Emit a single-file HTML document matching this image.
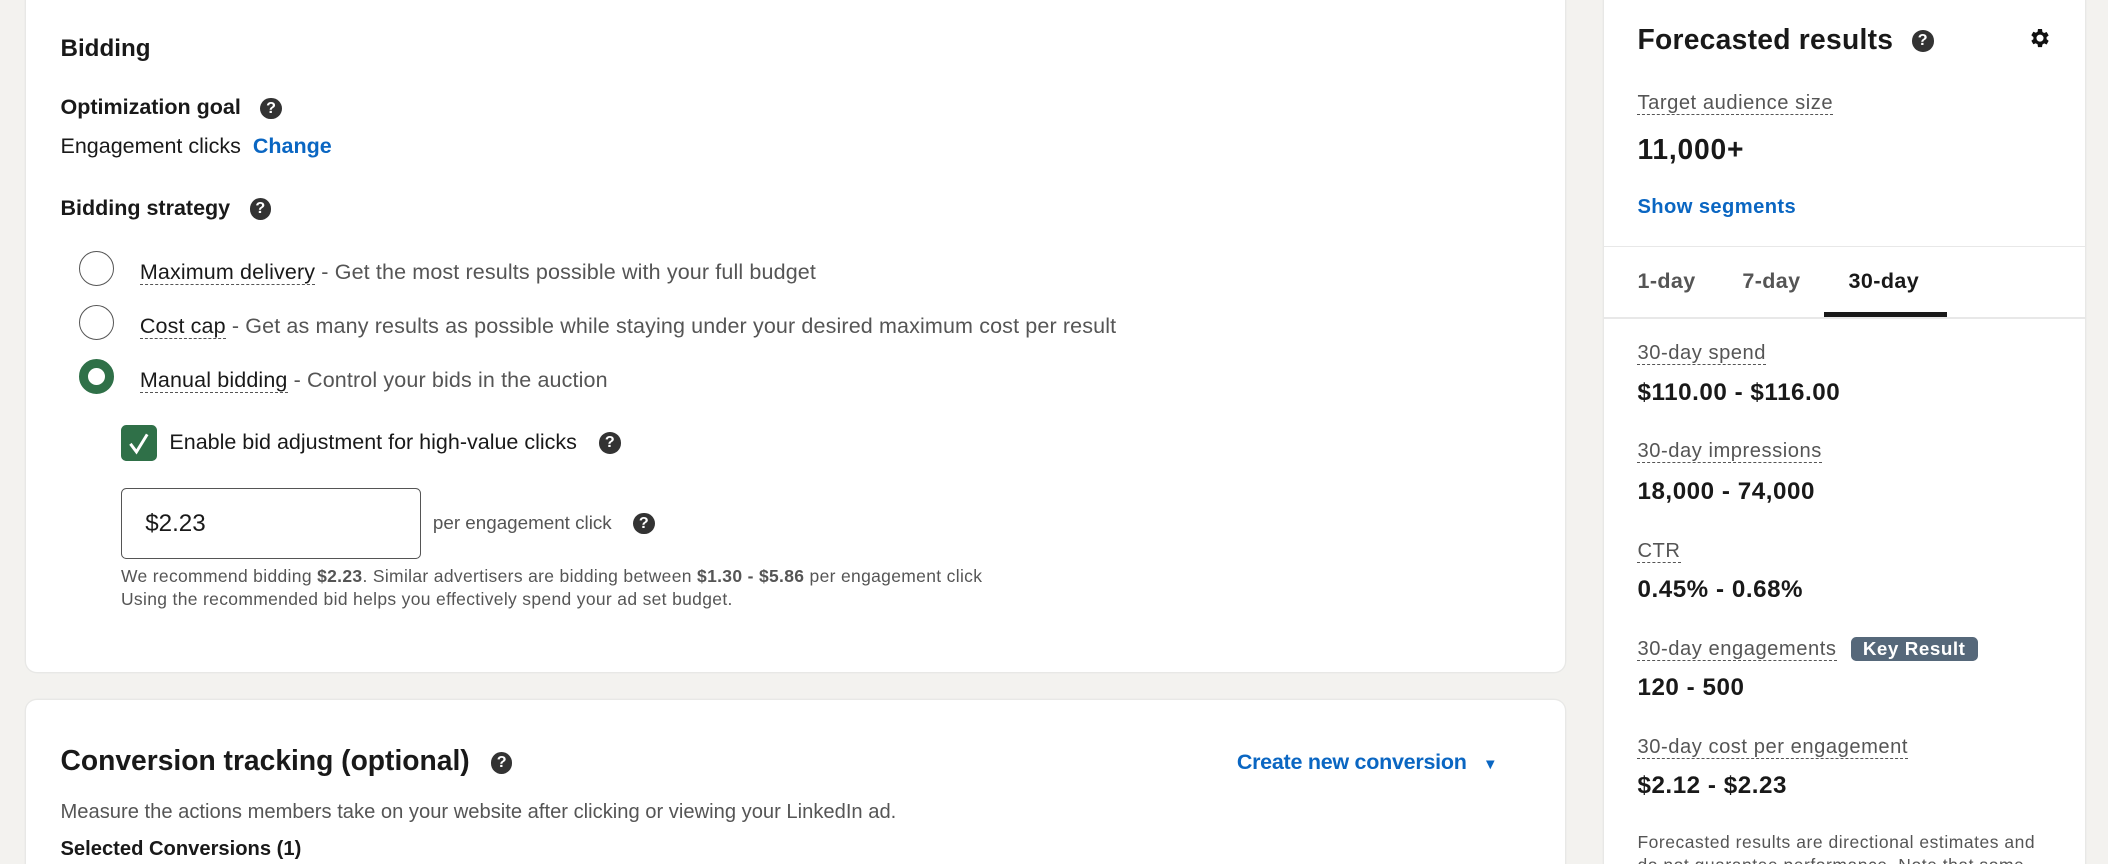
<!DOCTYPE html>
<html><head><meta charset="utf-8"><style>
*{margin:0;padding:0;box-sizing:border-box}
html,body{width:2108px;height:864px;overflow:hidden;background:#f3f2ef}
#z{zoom:1.34439;width:1568px;height:643px;position:relative;font-family:"Liberation Sans",sans-serif;color:#191919}
.a{position:absolute;white-space:nowrap;line-height:20px}
.card{position:absolute;background:#fff;border-radius:8px;box-shadow:0 0 0 1px #e8e8e6}
.q{display:inline-block;width:16px;height:16px;border-radius:50%;background:#333;color:#fff;font-size:12px;font-weight:bold;line-height:16px;text-align:center;vertical-align:middle}
.u{border-bottom:1px dashed #555}
.g{color:#555}
.r{position:absolute;width:26px;height:26px;border-radius:50%;border:1px solid #555;background:#fff}
.v{font-size:18px;font-weight:bold;letter-spacing:.4px}
.lab{font-size:15px;color:#555;letter-spacing:.4px}
</style></head><body><div id="z">
<div class="card" style="left:19px;top:-10px;width:1145px;height:510px"></div>
<div class="card" style="left:19px;top:521px;width:1145px;height:140px"></div>
<div class="card" style="left:1193px;top:-10px;width:358px;height:670px;border-radius:0"></div>

<div class="a" style="left:45px;top:27px;font-size:18px;font-weight:bold">Bidding</div>
<div class="a" style="left:45px;top:70px;font-size:16px;font-weight:bold">Optimization goal <span class="q" style="margin-left:10px">?</span></div>
<div class="a" style="left:45px;top:99px;font-size:16px">Engagement clicks&nbsp; <span style="color:#0a66c2;font-weight:bold">Change</span></div>
<div class="a" style="left:45px;top:145px;font-size:16px;font-weight:bold">Bidding strategy <span class="q" style="margin-left:10px">?</span></div>

<div class="r" style="left:59px;top:187px"></div>
<div class="a" style="left:104px;top:193px;font-size:16px;letter-spacing:.1px"><span class="u">Maximum delivery</span><span class="g"> - Get the most results possible with your full budget</span></div>
<div class="r" style="left:59px;top:227px"></div>
<div class="a" style="left:104px;top:233px;font-size:16px;letter-spacing:.1px"><span class="u">Cost cap</span><span class="g"> - Get as many results as possible while staying under your desired maximum cost per result</span></div>
<div class="r" style="left:59px;top:267px;border:7px solid #2f7048"></div>
<div class="a" style="left:104px;top:273px;font-size:16px;letter-spacing:.1px"><span class="u">Manual bidding</span><span class="g"> - Control your bids in the auction</span></div>

<div style="position:absolute;left:90px;top:316px;width:27px;height:27px;border-radius:4px;background:#2f7048"><svg width="27" height="27" viewBox="0 0 27 27"><path d="M7 14 L11.5 20 L19.5 7" stroke="#fff" stroke-width="2.2" fill="none"/></svg></div>
<div class="a" style="left:126px;top:319px;font-size:16px">Enable bid adjustment for high-value clicks <span class="q" style="margin-left:12px">?</span></div>

<div style="position:absolute;left:90px;top:363px;width:223px;height:53px;border:1px solid #555;border-radius:4px"></div>
<div class="a" style="left:108px;top:380px;font-size:18px">$2.23</div>
<div class="a" style="left:322px;top:379px;font-size:14px;color:#555">per engagement click <span class="q" style="margin-left:12px">?</span></div>
<div class="a" style="left:90px;top:420px;font-size:13px;color:#555;line-height:17px;letter-spacing:.25px">We recommend bidding <b>$2.23</b>. Similar advertisers are bidding between <b>$1.30 - $5.86</b> per engagement click<br>Using the recommended bid helps you effectively spend your ad set budget.</div>

<div class="a" style="left:45px;top:553px;font-size:21px;font-weight:bold;line-height:26px">Conversion tracking (optional) <span class="q" style="margin-left:10px">?</span></div>
<div class="a" style="left:920px;top:557px;font-size:16px;color:#0a66c2;font-weight:bold;letter-spacing:-.2px">Create new conversion <span style="font-size:11px;margin-left:8px">&#9660;</span></div>
<div class="a" style="left:45px;top:594px;font-size:15px;color:#555">Measure the actions members take on your website after clicking or viewing your LinkedIn ad.</div>
<div class="a" style="left:45px;top:622px;font-size:15px;font-weight:bold">Selected Conversions (1)</div>

<div class="a" style="left:1218px;top:16px;font-size:21px;font-weight:bold;line-height:26px;letter-spacing:.2px">Forecasted results <span class="q" style="margin-left:8px">?</span></div>
<svg style="position:absolute;left:1508px;top:19px" width="18" height="18" viewBox="0 0 24 24"><path fill="#111" d="M19.4 13a7.5 7.5 0 0 0 0-2l2.1-1.6-2-3.5-2.5 1a7 7 0 0 0-1.700-1L14.9 3h-4l-.4 2.7a7 7 0 0 0-1.7 1l-2.5-1-2 3.5L6.4 11a7.5 7.5 0 0 0 0 2l-2.1 1.6 2 3.5 2.5-1a7 7 0 0 0 1.7 1l.4 2.9h4l.4-2.7a7 7 0 0 0 1.7-1l2.5 1 2-3.5zM12.9 15.5a3.5 3.5 0 1 1 0-7 3.5 3.5 0 0 1 0 7z"/></svg>
<div class="a lab" style="left:1218px;top:67px"><span class="u">Target audience size</span></div>
<div class="a" style="left:1218px;top:99px;font-size:21px;font-weight:bold;line-height:24px;letter-spacing:.6px">11,000+</div>
<div class="a" style="left:1218px;top:144px;font-size:15px;font-weight:bold;color:#0a66c2;letter-spacing:.3px">Show segments</div>
<div style="position:absolute;left:1193px;top:183px;width:358px;height:1px;background:#e8e8e8"></div>
<div style="position:absolute;left:1193px;top:236px;width:358px;height:1px;background:#e8e8e8"></div>
<div class="a" style="left:1218px;top:199px;font-size:16px;font-weight:bold;color:#555;letter-spacing:.3px">1-day</div>
<div class="a" style="left:1296px;top:199px;font-size:16px;font-weight:bold;color:#555;letter-spacing:.3px">7-day</div>
<div class="a" style="left:1375px;top:199px;font-size:16px;font-weight:bold;letter-spacing:.3px">30-day</div>
<div style="position:absolute;left:1357px;top:232px;width:91px;height:4px;background:#191919"></div>

<div class="a lab" style="left:1218px;top:253px"><span class="u">30-day spend</span></div>
<div class="a v" style="left:1218px;top:283px">$110.00 - $116.00</div>
<div class="a lab" style="left:1218px;top:326px"><span class="u">30-day impressions</span></div>
<div class="a v" style="left:1218px;top:356px">18,000 - 74,000</div>
<div class="a lab" style="left:1218px;top:400px"><span class="u">CTR</span></div>
<div class="a v" style="left:1218px;top:429px">0.45% - 0.68%</div>
<div class="a lab" style="left:1218px;top:473px"><span class="u">30-day engagements</span> <span style="display:inline-block;margin-left:6px;background:#56687a;color:#fff;border-radius:4px;padding:0 9px;font-size:14px;line-height:18px;font-weight:bold">Key Result</span></div>
<div class="a v" style="left:1218px;top:502px">120 - 500</div>
<div class="a lab" style="left:1218px;top:546px"><span class="u">30-day cost per engagement</span></div>
<div class="a v" style="left:1218px;top:575px">$2.12 - $2.23</div>
<div class="a" style="left:1218px;top:618px;font-size:13px;color:#555;line-height:17px;letter-spacing:.4px">Forecasted results are directional estimates and<br>do not guarantee performance. Note that some</div>
</div></body></html>
